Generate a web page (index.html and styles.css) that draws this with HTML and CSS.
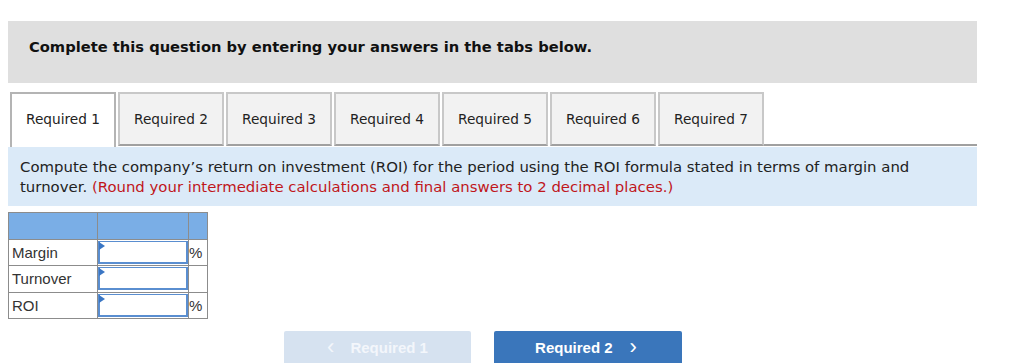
FILE: index.html
```html
<!DOCTYPE html>
<html>
<head>
<meta charset="utf-8">
<link rel="stylesheet" href="styles.css">
</head>
<body>
<div class="page">
  <div class="banner">Complete this question by entering your answers in the tabs below.</div>
  <div class="tabs">
    <div class="tab active">Required 1</div>
    <div class="tab">Required 2</div>
    <div class="tab">Required 3</div>
    <div class="tab">Required 4</div>
    <div class="tab">Required 5</div>
    <div class="tab">Required 6</div>
    <div class="tab">Required 7</div>
    <div class="tab-rest"></div>
  </div>
  <div class="prompt">Compute the company’s return on investment (ROI) for the period using the ROI formula stated in terms of margin and <span class="line2">turnover. <span class="red">(Round your intermediate calculations and final answers to 2 decimal places.)</span></span></div>
  <table class="grid">
    <tr class="head"><td class="c1"></td><td class="c2"></td><td class="c3"></td></tr>
    <tr><td class="c1">Margin</td><td class="c2"><div class="inp"></div></td><td class="c3">%</td></tr>
    <tr><td class="c1">Turnover</td><td class="c2"><div class="inp"></div></td><td class="c3"></td></tr>
    <tr><td class="c1">ROI</td><td class="c2"><div class="inp"></div></td><td class="c3">%</td></tr>
  </table>
  <div class="nav">
    <div class="btn prev"><span class="chev">&lsaquo;</span>Required 1</div>
    <div class="btn next">Required 2<span class="chev r">&rsaquo;</span></div>
  </div>
</div>
</body>
</html>
```
FILE: styles.css
```css
html, body { margin: 0; padding: 0; background: #fff; }
body { padding: 21px 0 0 8px; width: 969px; overflow: hidden; height: 342px; }
.page { display: flex; flex-direction: column; align-items: flex-start; }
.banner {
  align-self: stretch;
  background: #dfdfdf;
  height: 62px;
  box-sizing: border-box;
  padding: 17px 0 0 21px;
  font-family: "DejaVu Sans", Verdana, sans-serif;
  font-weight: bold;
  font-size: 14.7px;
  color: #111;
}
.tabs { align-self: stretch; display: flex; margin-top: 9px; padding-left: 2px; height: 55px; }
.tab {
  width: 106px;
  height: 54px;
  box-sizing: border-box;
  margin-right: 2px;
  border: 2px solid #c8c8c8;
  border-bottom: 2px solid #a0a0a0;
  background: #f2f2f2;
  font-family: "DejaVu Sans", Verdana, sans-serif;
  font-size: 13.7px;
  color: #222;
  display: flex; align-items: center; justify-content: center;
  padding-bottom: 1px;
}
.tab.active { background: #fff; border-color: #b4b4b4; border-bottom: none; height: 55px; padding-bottom: 3px; }
.tab-rest { flex: 1; border-bottom: 2px solid #a0a0a0; height: 54px; box-sizing: border-box; margin-left: -2px; }
.prompt {
  align-self: stretch;
  background: #dbeaf8;
  height: 59px;
  box-sizing: border-box;
  padding: 10px 12px 0 12px;
  font-family: "DejaVu Sans", Verdana, sans-serif;
  font-size: 14.9px;
  line-height: 20px;
  color: #222;
}
.red { color: #c0161b; }
.grid {
  margin-top: 6px;
  border-collapse: collapse;
  font-family: "Liberation Sans", Arial, sans-serif;
  font-size: 15px;
  color: #333;
}
.grid td { border: 1px solid #8c8c8c; padding: 0; height: 25.5px; }
.grid td.c1 { padding-left: 3px; }
.grid .head td { background: #7aaee6; }
.c1 { width: 85px; }
.c2 { width: 90px; }
.c3 { width: 18px; }
.inp {
  height: 23px;
  box-sizing: border-box;
  border: 2px solid #5a8ed0;
  border-top-width: 1px;
  position: relative;
  background: #fff;
}
.inp::before {
  content: "";
  position: absolute; left: -1px; top: 0;
  border-left: 6px solid #3a76c4;
  border-top: 4px solid transparent;
  border-bottom: 4px solid transparent;
}
.nav { display: flex; margin-top: 12px; margin-left: 276px; gap: 23px; }
.btn {
  width: 187px; height: 33px; box-sizing: border-box;
  border-radius: 2px 2px 0 0;
  font-family: "Liberation Sans", Arial, sans-serif;
  font-weight: bold; font-size: 15px;
  color: #fff;
  display: flex; align-items: center; justify-content: center;
}
.prev { background: #d6e2f0; color: #f3f6fb; }
.prev .chev { margin-right: 16px; }
.next { background: #3a76bb; width: 188px; padding-right: 4px; }
.chev { font-size: 22px; font-weight: normal; margin-right: 12px; line-height: 1; position: relative; top: -1px; }
.chev.r { margin: 0 0 0 17px; }
```
